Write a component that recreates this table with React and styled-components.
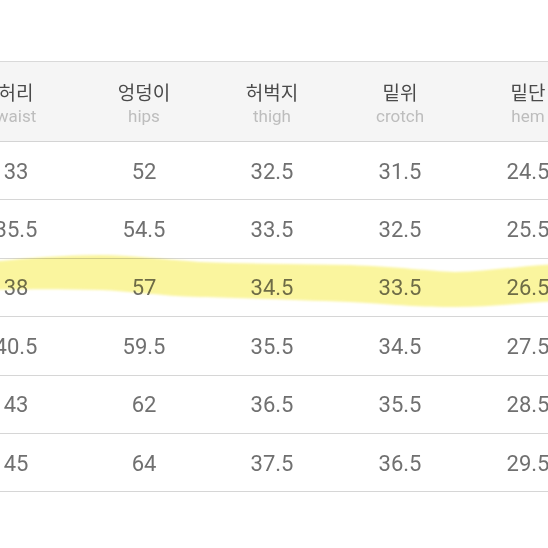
import styled, { createGlobalStyle } from 'styled-components'

// Size chart (cm) — the view is cropped, so the first column sits partly off the left edge

const GlobalStyle = createGlobalStyle`
  html, body { margin: 0; padding: 0; background: #fff; }
  body { font-family: Roboto, "Noto Sans CJK KR", sans-serif; }
`

const Page = styled.div`
  position: relative;
  width: 548px;
  height: 548px;
  overflow: hidden;
  background: #fff;
`

const Table = styled.div`
  width: 640px;
  margin: 61px 0 0 -48px;
`

const HeadRow = styled.div`
  display: grid;
  grid-template-columns: repeat(5, 128px);
  height: 81px;
  box-sizing: border-box;
  background: #f5f5f5;
  border-top: 1px solid #d9d9d9;
  border-bottom: 1px solid #d4d4d4;
`

const HeadCell = styled.div`
  display: flex;
  flex-direction: column;
  align-items: center;
  justify-content: center;
  padding-top: 2px;
`

const Korean = styled.div`
  font-family: "Noto Sans CJK KR", sans-serif;
  font-size: 19px;
  line-height: 26px;
  color: #4a4a4a;
`

const English = styled.div`
  font-family: Roboto, sans-serif;
  font-size: 17px;
  line-height: 22px;
  color: #bdbdbd;
`

const Row = styled.div`
  display: grid;
  grid-template-columns: repeat(5, 128px);
  height: 58.4px;
  box-sizing: border-box;
  border-bottom: 1px solid #d6d6d6;
`

const Cell = styled.div`
  display: flex;
  align-items: center;
  justify-content: center;
  font-family: Roboto, sans-serif;
  font-size: 22px;
  color: #707070;
  padding-top: 1px;
`

const Highlight = styled.svg`
  position: absolute;
  left: 0;
  top: 0;
  pointer-events: none;
  mix-blend-mode: multiply;
`

const columns = [
  { ko: '허리', en: 'waist' },
  { ko: '엉덩이', en: 'hips' },
  { ko: '허벅지', en: 'thigh' },
  { ko: '밑위', en: 'crotch' },
  { ko: '밑단', en: 'hem' },
]

const rows = [
  ['33', '52', '32.5', '31.5', '24.5'],
  ['35.5', '54.5', '33.5', '32.5', '25.5'],
  ['38', '57', '34.5', '33.5', '26.5'],
  ['40.5', '59.5', '35.5', '34.5', '27.5'],
  ['43', '62', '36.5', '35.5', '28.5'],
  ['45', '64', '37.5', '36.5', '29.5'],
]

const App = () => (
  <Page>
    <GlobalStyle />
    <Table>
      <HeadRow>
        {columns.map(c => (
          <HeadCell key={c.en}>
            <Korean>{c.ko}</Korean>
            <English>{c.en}</English>
          </HeadCell>
        ))}
      </HeadRow>
      {rows.map((r, i) => (
        <Row key={i}>
          {r.map((v, j) => <Cell key={j}>{v}</Cell>)}
        </Row>
      ))}
    </Table>

    {/* marker stroke over the third row */}
    <Highlight width="548" height="548" viewBox="0 0 548 548">
      <defs>
        <filter id="soft" x="-5%" y="-50%" width="110%" height="200%">
          <feGaussianBlur stdDeviation="0.9" />
        </filter>
      </defs>
      <path
        filter="url(#soft)"
        fill="#faf59e"
        d="M-10 262 C 20 259, 60 255, 100 255 C 130 255, 160 259, 200 262
           C 250 264, 300 264, 350 265 C 400 267, 430 271, 455 272
           C 485 272, 515 266, 560 264
           L 560 301 C 520 303, 490 307, 455 307 C 420 307, 400 305, 350 302
           C 300 300, 240 298, 200 297 C 160 296, 130 291, 100 290
           C 60 289, 30 289, -10 290 Z"
      />
    </Highlight>
  </Page>
)

export default App
